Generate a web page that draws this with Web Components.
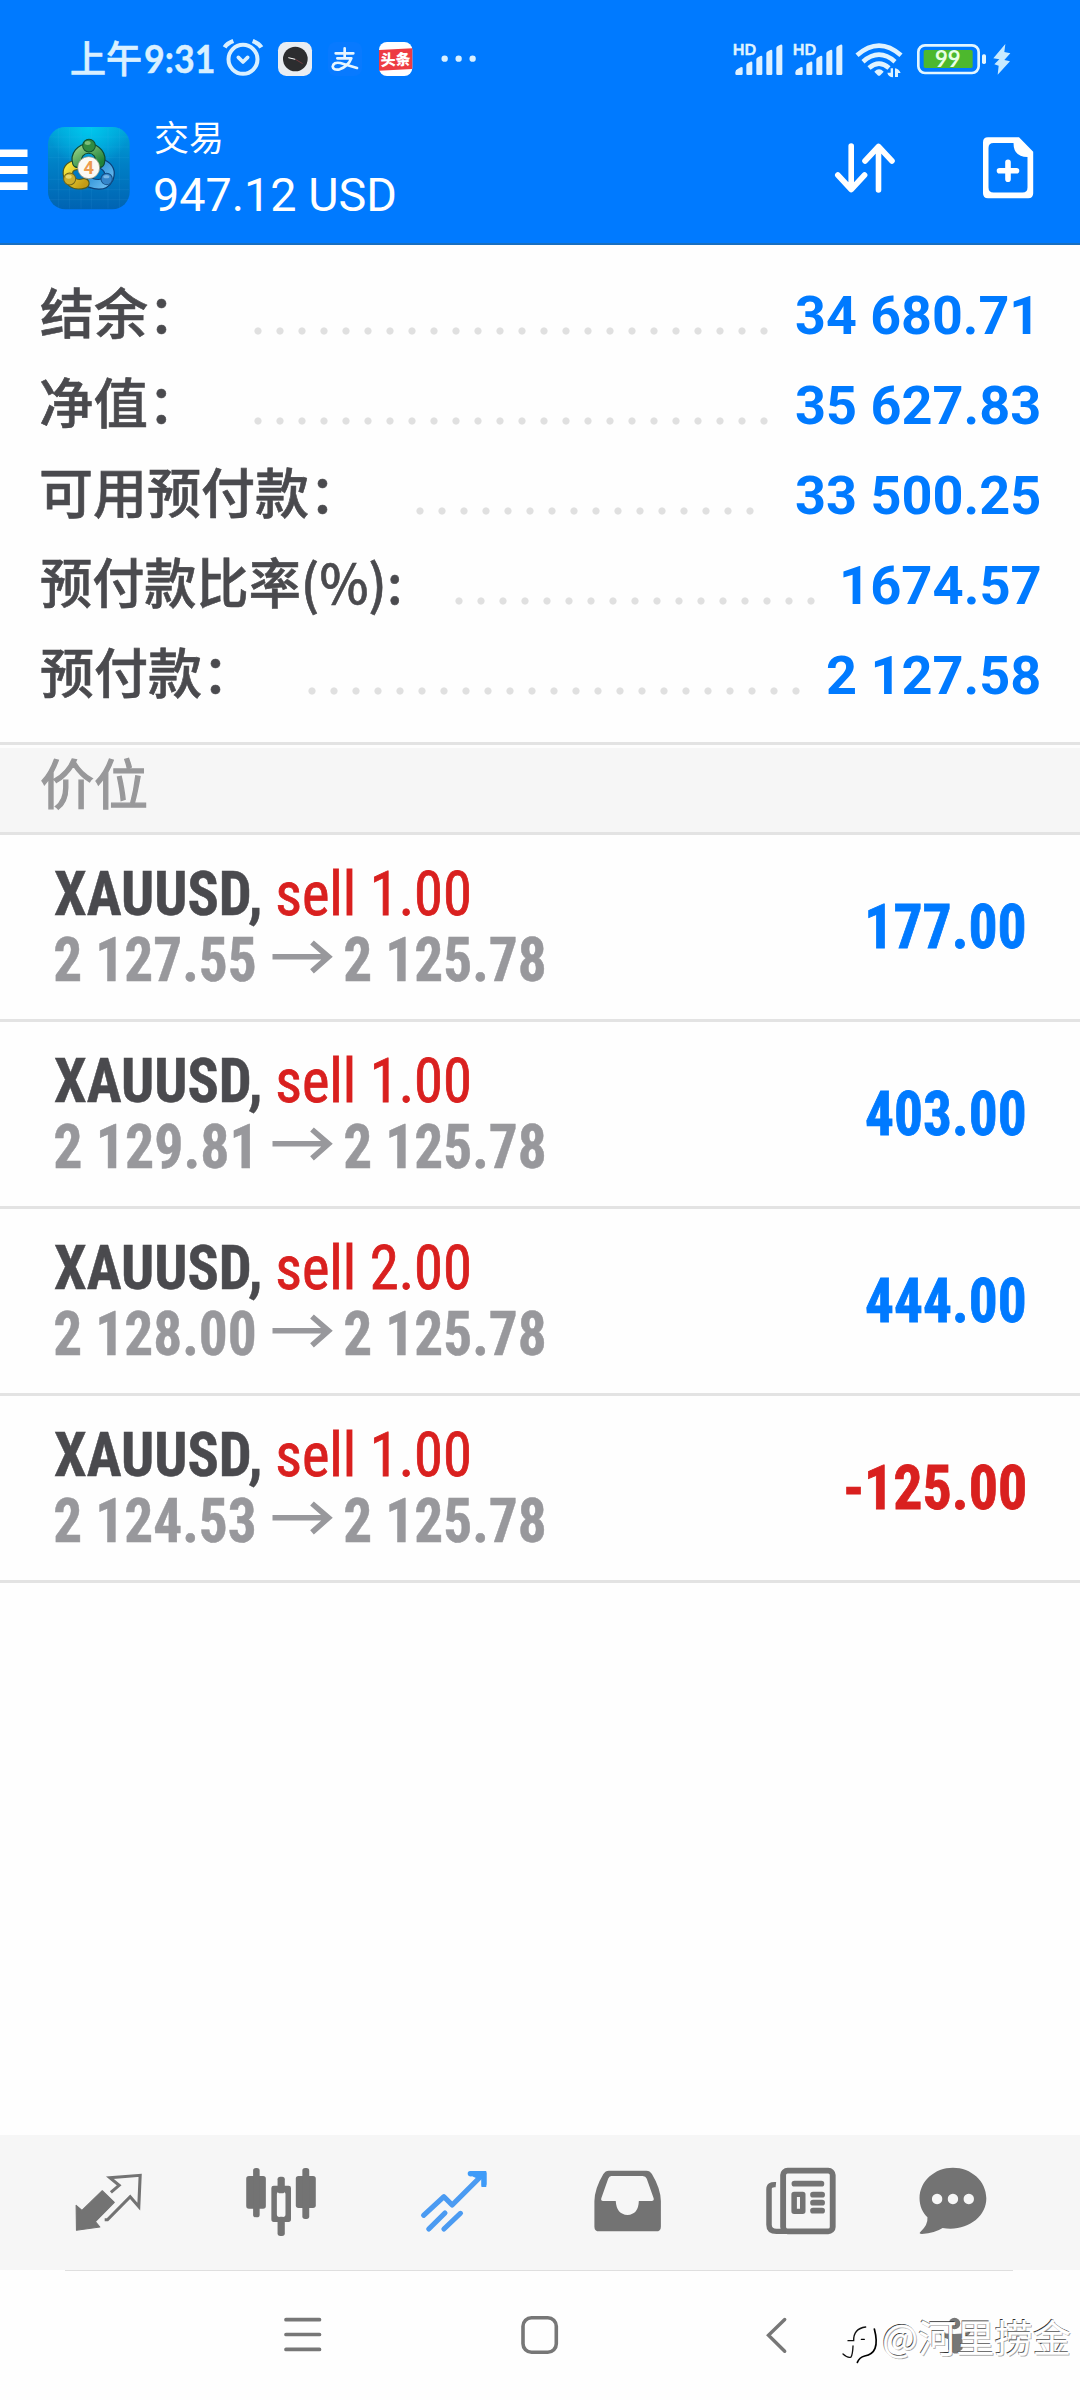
<!DOCTYPE html>
<html lang="zh-CN">
<head>
<meta charset="utf-8">
<title>交易</title>
<style>
html,body{margin:0;padding:0;background:#fefefe}
body{width:1080px;height:2400px;overflow:hidden;font-family:Roboto,"Noto Sans CJK SC",sans-serif}
</style>
</head>
<body>
<trade-app></trade-app>
<script>
const CJK = '"Noto Sans CJK SC",sans-serif';
const LATIN = 'Roboto,"Noto Sans CJK SC",sans-serif';
const COND = '"Roboto Condensed",Roboto,"Noto Sans CJK SC",sans-serif';
const FONTS = {cjk: CJK, latin: LATIN, cond: COND, round: 'Lato,sans-serif'};

/* Text whose ink spans exactly `w` pixels; the host's bottom edge is the baseline.
   `st` thickens the strokes by that many pixels. */
class FitText extends HTMLElement {
  connectedCallback() {
    const w = +this.getAttribute('w'), b = +this.getAttribute('b'), fs = +this.getAttribute('fs');
    const fw = this.getAttribute('fw') || 400, ff = FONTS[this.getAttribute('ff') || 'latin'];
    const c = document.createElement('canvas').getContext('2d');
    c.font = `${fw} ${fs}px ${ff}`;
    const m = c.measureText(this.textContent);
    const s = w / (m.actualBoundingBoxLeft + m.actualBoundingBoxRight);
    const lh = Math.round(fs);
    const base = lh / 2 + (m.fontBoundingBoxAscent - m.fontBoundingBoxDescent) / 2;
    this.attachShadow({mode: 'open'}).innerHTML = `<style>
      :host{display:block;flex:none;width:${w}px;height:${b}px}
      span{display:block;width:max-content;white-space:pre;font:${fw} ${fs}px/${lh}px ${ff};transform-origin:0 0;
      -webkit-text-stroke:${this.getAttribute('st') || 0}px currentColor;
      transform:translate(${m.actualBoundingBoxLeft * s}px,${b - base}px) scaleX(${s})}
      </style><span><slot></slot></span>`;
  }
}
customElements.define('fit-text', FitText);

const signal = x => `<text x="${x}" y="75" font-family="Lato" font-weight="700" font-size="47" textLength="70" lengthAdjust="spacingAndGlyphs" fill="#dff3ff" stroke="#dff3ff" stroke-width="1.5">HD</text>
  <path fill="#dff1ff" d="M${x+8} 135v-8q0-7 8-11l8-4q6-3 6 3v16q0 4-4 4h-14q-4 0-4-4zM${x+41} 131v-26q0-4 6-7l6-3q6-2 6 3v33q0 4-4 4h-10q-4 0-4-4zM${x+71} 131V88q0-4 6-7l6-3q6-2 6 3v50q0 4-4 4h-10q-4 0-4-4zM${x+101} 131V70q0-4 6-7l6-3q6-2 6 3v68q0 4-4 4h-10q-4 0-4-4zM${x+131} 131V54q0-4 6-7l6-3q6-2 6 3v84q0 4-4 4h-10q-4 0-4-4z"/>`;

const ICONS = {
  alarm: ['10 28 126 116', 42, 38.7, `<g fill="none" stroke="#d9f0ff" stroke-linecap="round" stroke-linejoin="round"><circle cx="70" cy="92" r="43.500" stroke-width="12"/><path stroke-width="11" d="M56 86l14 14 14-14"/><path stroke-width="13" stroke-linecap="butt" d="M15 56Q22 44 41 37M125 56Q118 44 99 37"/></g>`],
  clock: ['174 36 102 102', 34, 34, `<rect x="174" y="36" width="102" height="102" rx="25" fill="#e9edf2"/><circle cx="226" cy="87" r="37" fill="#2c2d2f"/><path d="M205 83l21 5" stroke="#fff" stroke-width="3"/><path d="M226 88l22 13" stroke="#914348" stroke-width="2"/>`],
  alipay: ['324 36 102 102', 34, 34, `<rect x="324" y="36" width="102" height="102" rx="24" fill="#087aff"/><g fill="none" stroke="#e7f6ff" stroke-width="8" stroke-linecap="round" stroke-linejoin="round"><path d="M347 70h53M374 55v28M352 85h42Q385 109 359 118Q339 121 338 110Q340 95 361 99L411 114"/></g>`],
  toutiao: ['476 36 100 102', 33.3, 34, `<rect x="476" y="36" width="100" height="102" rx="24" fill="#fff"/><path fill="#ed3b43" d="M476 60l100-5v62l-100 5z"/><text x="481" y="106" transform="rotate(-2 526 88)" font-family="Noto Sans CJK SC" font-weight="900" font-size="46" textLength="90" lengthAdjust="spacingAndGlyphs" fill="#fff">头条</text>`],
  more: ['664 76 106 22', 35.3, 7.3, `<g fill="#d9f0ff"><circle cx="675" cy="87" r="9.5"/><circle cx="717" cy="87" r="9.5"/><circle cx="759" cy="87" r="9.5"/></g>`],
  sig1: ['36 36 180 108', 60, 36, signal(38)],
  sig2: ['216 36 180 108', 60, 36, signal(218)],
  wifi: ['396 36 180 108', 60, 36, `<g fill="none" stroke="#dff3ff" stroke-width="14"><path d="M411 76Q477 18 543 76M429 95Q477 53 525 95M447 114Q477 88 507 114"/></g><path d="M463 125q14-14 28 0l-10 11q-4 3-8 0z" fill="#dff3ff"/><g fill="#dff3ff"><path d="M512 115h7v27q-14-1-17-14h10zM525 115q12 2 17 14h-8v12h-9z"/></g>`],
  battery: ['576 36 312 108', 104, 36, `<rect x="595" y="46" width="181" height="83" rx="20" fill="none" stroke="#e3f6ff" stroke-width="8"/><rect x="611" y="60" width="147" height="54" rx="5" fill="#4db82d"/><text x="645" y="112" font-family="Lato" font-weight="700" font-size="69" textLength="77" lengthAdjust="spacingAndGlyphs" fill="#e8ffe5">99</text><rect x="786" y="73" width="12" height="29" rx="5" fill="#e3f6ff"/><path d="M856 42l-36 43 18 3-15 15 13 4-3 27 37-40-17-4 18-20-18-4z" fill="#c8eaff"/>`],
  burger: ['0 146 28 48', 28, 48, `<path fill="#fff" d="M0 149.5h27.5v7.5H0zM0 166h27.5v8H0zM0 182.3h27.5v7.7H0z"/>`],
  mt4: ['23 290 245 247', 81.7, 82.3, `<defs><linearGradient id="b" x2="0" y2="1"><stop stop-color="#00a5d8"/><stop offset=".45" stop-color="#0080c6"/><stop offset="1" stop-color="#0063b2"/></linearGradient><radialGradient id="l" cx=".5" cy="0" r=".5"><stop stop-color="#00c8ee"/><stop offset="1" stop-color="#00c8ee" stop-opacity="0"/></radialGradient><linearGradient id="g" x2="1" y2="1"><stop stop-color="#8ccb80"/><stop offset="1" stop-color="#1f8239"/></linearGradient><linearGradient id="y" x2="1" y2="1"><stop stop-color="#f6e63e"/><stop offset="1" stop-color="#c49b16"/></linearGradient><linearGradient id="u" x2="1" y2="1"><stop stop-color="#1c86d0"/><stop offset="1" stop-color="#6bbcf0"/></linearGradient></defs>
   <rect x="23" y="290" width="245" height="247" rx="52" fill="url(#b)"/><rect x="23" y="290" width="245" height="247" rx="52" fill="url(#l)"/><path d="M54 292v243M88 292v243M122 292v243M153 292v243M203 292v243M237 292v243M25 320h241M25 350h241M25 382h241M25 447h241M25 478h241M25 508h241" stroke="#5cc9ff" stroke-opacity=".18" stroke-width="1.5"/>
   <g stroke-linecap="round" fill="none"><path d="M187 402Q214 416 205 443Q190 472 150 457" stroke="#0c4078" stroke-width="32"/><path d="M187 402Q214 416 205 443Q190 472 150 457" stroke="url(#u)" stroke-width="25"/>
   <path d="M108 404Q77 409 84 438Q96 470 132 459" stroke="#4f5a1d" stroke-width="32"/><path d="M108 404Q77 409 84 438Q96 470 132 459" stroke="url(#y)" stroke-width="25"/>
   <path d="M111 397A35 33 0 1 1 178 397" stroke="#0e4a33" stroke-width="32"/><path d="M111 397A35 33 0 1 1 178 397" stroke="url(#g)" stroke-width="25"/></g>
   <circle cx="146" cy="346" r="19" fill="#2f8b42" stroke="#12502c" stroke-width="3"/><ellipse cx="142" cy="338" rx="9" ry="6" fill="#9ed392" opacity=".7"/><circle cx="88" cy="446" r="18" fill="#cdaf2c" stroke="#6d641c" stroke-width="3"/><ellipse cx="85" cy="439" rx="9" ry="6" fill="#f5e887" opacity=".7"/><circle cx="199" cy="446" r="17" fill="#3586cb" stroke="#134e86" stroke-width="3"/><ellipse cx="198" cy="439" rx="9" ry="5" fill="#a5d5f6" opacity=".6"/><circle cx="145" cy="412" r="33" fill="#fbf9f4" stroke="#8e8b70" stroke-width="2"/><text x="145" y="432" text-anchor="middle" font-family="Roboto" font-weight="700" font-size="55" fill="#ed9b4e">4</text>`],
  sort: ['834 141 63 54', 63, 54, `<path fill="none" stroke="#fff" stroke-width="5.6" stroke-linecap="round" stroke-linejoin="round" d="M851.2 146v43.500M837.800 175l13.400 14.500 13.400-14.500M878.500 190v-43.500M865 161l13.500-14.500 13.500 14.500"/>`],
  add: ['982 136 52 64', 52, 64, `<path fill="#fff" fill-rule="evenodd" d="M988 137.300h31l14.200 14.500v41.500q0 5-5 5H988q-5 0-5-5v-51q0-5 5-5zM993.500 143q-5 0-5 5v39.500q0 5 5 5h29q5 0 5-5v-30.500q-14 0-14-14z"/><path d="M999.500 170.800h17M1008 162.300v17" stroke="#fff" stroke-width="5.600" stroke-linecap="round"/>`],
  arrow: ['272 940 60 34', 60, 34, `<path d="M272.500 956.800h56M312 942.500l16.500 14.300-16.500 14.500" fill="none" stroke="#98989c" stroke-width="5.600"/>`],
  quotes: ['0 45 522.7 405', 180, 135, `<path fill="#737373" stroke="#737373" stroke-width="3" stroke-linejoin="round" d="M221 256l17 15 59-59 35 35-55 58 13 16-68 10z"/><path fill="none" stroke="#737373" stroke-width="9" d="M322 217l24-21-27-23 88-7-4 94-25-30-66 69h-8"/>`],
  chart: ['522.7 45 522.7 405', 180, 135, `<g fill="#737373"><rect x="715" y="168" width="57" height="98" rx="8"/><rect x="735" y="144" width="19" height="148" rx="8"/><rect x="859" y="168" width="58" height="96" rx="8"/><rect x="878" y="144" width="20" height="153" rx="8"/><rect x="806" y="170" width="21" height="50" rx="8"/><rect x="806" y="290" width="21" height="58" rx="8"/><path fill-rule="evenodd" d="M795 197h43q7 0 7 7v94q0 8-7 8h-43q-7 0-7-8v-94q0-7 7-7zM811 215q-7 0-7 8v60q0 8 7 8h11q7 0 7-8v-60q0-8-7-8z"/></g>`],
  trade: ['1045.3 45 522.7 405', 180, 135, `<path fill="none" stroke="#4b9bf2" stroke-width="15" stroke-linecap="round" stroke-linejoin="round" d="M1230 286l59-56 24 25 91-94"/><path fill="none" stroke="#3e9bf8" stroke-width="14" d="M1365 160h40v41"/><path d="M1245 327l47-48M1289 327l48-47" stroke="#4b9bf2" stroke-width="15" stroke-linecap="round"/><path d="M1365 153h40q8 0 8 8v32q0 7-7 8-8 0-8-7v-18l-5 3-22-10q-12 2-13-8 0-8 7-8z" fill="#3e9bf8"/>`],
  history: ['0 45 522.7 405', 180, 135, `<path fill="#737373" fill-rule="evenodd" d="M200 152h109q10 0 16 10 25 43 26 81v77q0 14-14 14H172q-14 0-14-14v-77q1-38 26-81 6-10 16-10zM207 168q-6 0-9 8l-20 59q-2 8 5 8h37q2 40 34 42 32-2 33-42h37q8 0 6-8l-20-59q-3-8-12-8z"/>`],
  news: ['522.7 45 522.7 405', 180, 135, `<g fill="none" stroke="#737373"><path stroke-width="16" d="M685 194q-20-2-20 14v106q0 20 22 20h30"/><rect x="706" y="152" width="144" height="182" rx="13" stroke-width="17"/></g><g stroke="#737373" stroke-width="17" stroke-linecap="round"><path d="M739 191h78M793 224h26M793 248h26M793 272h26"/></g><path fill="#737373" fill-rule="evenodd" d="M738 215h25q8 0 8 8v51q0 8-8 8h-25q-8 0-8-8v-51q0-8 8-8zM746 231v35h9v-35z"/>`],
  chat: ['1045.3 45 522.7 405', 180, 135, `<path fill="#737373" fill-rule="evenodd" d="M1199 143c53 0 97 40 97 92 0 59-60 101-127 89q-22 15-60 18-11-1-4-7 22-20 20-43c-14-13-23-34-23-57 0-52 44-92 97-92zM1153 221a15 16 0 1 0 .1 0zM1199 221a15 16 0 1 0 .1 0zM1245 221a15 16 0 1 0 .1 0z"/>`],
  menu: ['284 2316 37.500 40', 37.5, 40, `<path d="M286 2320.700h33.500M286 2335.500h33.500M286 2350.400h33.500" stroke="#777" stroke-width="3.700" stroke-linecap="round"/>`],
  home: ['521 2315 38 40', 38, 40, `<rect x="523" y="2317.800" width="33.300" height="34.500" rx="8.500" fill="none" stroke="#777" stroke-width="3.600"/>`],
  back: ['765 2315 24 40', 24, 40, `<path d="M784.700 2319.500L768.500 2335.300l16.200 16" fill="none" stroke="#777" stroke-width="3.400" stroke-linecap="round"/>`],
  person: ['936 2315 36 40', 36, 40, `<circle cx="954.500" cy="2323.500" r="5.800" fill="#777"/><path fill="#777" d="M938 2331.500q16 5 33 0l-2 3q-4 3-6.500 4.500v10l-5.500 4.500h-3l-6-4v-10.500q-8-2-10-7.500z"/>`],
  mark: ['62 76 110 116', 36.7, 38.7, `<g fill="none" stroke-linecap="round"><path d="M68 163q14 13 24 9 5-8 6-33M83 123h17q-1-36 36-41" stroke="#111" stroke-width="4"/><path d="M162 88q10 38 2 58-7 18-31 23-16 4-22 19" stroke="#000" stroke-width="5"/><path d="M123 119h9" stroke="#000" stroke-width="4"/></g>`]
};
class UiIcon extends HTMLElement {
  connectedCallback() {
    const [vb, w, h, body] = ICONS[this.getAttribute('name')];
    this.attachShadow({mode: 'open'}).innerHTML = `<style>:host{display:block;flex:none;width:${w}px;height:${h}px}svg{display:block;overflow:visible}</style>
      <svg width="${w}" height="${h}" viewBox="${vb}" preserveAspectRatio="none">${body}</svg>`;
  }
}
customElements.define('ui-icon', UiIcon);

const define = (name, css, html) => customElements.define(name, class extends HTMLElement {
  connectedCallback() {
    if (this.shadowRoot) return;
    this.attachShadow({mode: 'open'}).innerHTML = `<style>${css}</style>${typeof html === 'function' ? html(this) : html}`;
  }
});

define('status-bar', `
  :host{display:flex;justify-content:space-between;height:110px;box-sizing:border-box;padding:40px 64px 0 71px;color:#d9f0ff}
  .l,.r{display:flex}.r{padding-top:2px}
  .l>*{margin-top:2px}`, `
  <div class="l"><fit-text w="70" b="31" fs="37" fw="500" ff="cjk" st=".7">上午</fit-text>
  <fit-text style="margin-left:3.500px" w="69" b="31" fs="39" fw="700" ff="round" st=".4">9:31</fit-text>
  <ui-icon name="alarm" style="margin:-2px 0 0 9px"></ui-icon>
  <ui-icon name="clock" style="margin-left:13.500px"></ui-icon><ui-icon name="alipay" style="margin-left:16px"></ui-icon>
  <ui-icon name="toutiao" style="margin-left:16.700px"></ui-icon><ui-icon name="more" style="margin:15.300px 0 0 29.300px"></ui-icon></div>
  <div class="r"><ui-icon name="sig1"></ui-icon><ui-icon name="sig2"></ui-icon><ui-icon name="wifi"></ui-icon><ui-icon name="battery"></ui-icon></div>`);

define('app-bar', `
  :host{display:flex;height:135px;box-sizing:border-box;border-bottom:2px solid #196fc0;color:#fff}
  .t{display:flex;flex-direction:column;margin-left:26px;padding-top:10px;gap:26px;flex:1}`, `
  <ui-icon name="burger" style="margin-top:36px"></ui-icon>
  <ui-icon name="mt4" style="margin:16.700px 0 0 19.700px"></ui-icon>
  <div class="t"><fit-text w="66" b="30.500" fs="35" ff="cjk">交易</fit-text><fit-text w="240" b="33.500" fs="47">947.12 USD</fit-text></div>
  <ui-icon name="sort" style="margin:31px 85px 0 0"></ui-icon><ui-icon name="add" style="margin:26px 46px 0 0"></ui-icon>`);

define('summary-row', `
  :host{display:flex;height:90px;box-sizing:border-box;padding:10px 41px 0 40.500px;color:#4a4a4e}
  .d{height:8px;margin-top:36.500px;background:radial-gradient(circle at 4px 4px,#e0e0e0 3.2px,transparent 4px) 0 0/22px 8px repeat-x}
  .v{margin-left:auto;color:#007aff}`, el => {
  const a = n => el.getAttribute(n);
  return `<fit-text w="${a('lw')}" b="44" fs="54" fw="500" ff="cjk" st=".6">${a('label')}</fit-text>
  <div class="d" style="margin-left:${a('dx') - 4 - 40.5 - a('lw')}px;width:${(a('n') - 1) * 22 + 8}px"></div>
  <fit-text class="v" style="margin-right:${a('mr') || 0}px" w="${a('vw')}" b="44.300" fs="54.500" fw="700">${a('value')}</fit-text>`;
});

define('section-head', `
  :host{display:block;height:93px;box-sizing:border-box;border:3px solid #e3e3e3;border-width:3px 0;background:linear-gradient(#fdfdfd 3px,#f6f6f6 3px);padding:14px 40.500px 0;color:#98989a}`,
  `<fit-text w="105" b="46.500" fs="54" fw="400" ff="cjk" st="1.300">价位</fit-text>`);

define('position-row', `
  :host{display:flex;height:187px;box-sizing:border-box;border-bottom:3px solid #e3e3e3;padding:36px 55.500px 0 55px}
  .i{display:flex;flex-direction:column;gap:20.500px}.a,.b{display:flex}
  .a{color:#4a4a4e}.s{margin-left:18.500px;color:#d9201f}.b{color:#98989c}
  ui-icon{margin-top:4.500px}
  .p{margin:32.700px 0 0 auto;color:#007aff}.p.neg{color:#d9201f}`, el => {
  const a = n => el.getAttribute(n), ow = +a('ow') || 199.5;
  return `<div class="i"><div class="a"><fit-text w="204.500" b="44" fs="62" fw="700" ff="cond" st=".5">XAUUSD,</fit-text><fit-text class="s" w="191.500" b="44" fs="62" fw="400" ff="cond" st=".8">sell ${a('lots')}</fit-text></div>
  <div class="b"><fit-text w="${ow}" b="45" fs="62" fw="700" ff="cond" st=".5">${a('open')}</fit-text><ui-icon name="arrow" style="margin-left:${217.2 - ow}px"></ui-icon><fit-text style="margin-left:13.300px" w="199.500" b="45" fs="62" fw="700" ff="cond" st=".5">2 125.78</fit-text></div></div>
  <fit-text class="p ${a('pl')[0] === '-' ? 'neg' : ''}" w="${a('pw')}" b="44.500" fs="62" fw="700" ff="cond" st=".8">${a('pl')}</fit-text>`;
});

define('tab-bar', `
  :host{display:flex;height:135px;background:#f6f6f6;margin-top:auto}`,
  ['quotes', 'chart', 'trade', 'history', 'news', 'chat'].map(n => `<ui-icon name="${n}"></ui-icon>`).join(''));

define('nav-bar', `
  :host{display:flex;position:relative;height:130px;box-sizing:border-box;padding:45px 0 0 284px;background:linear-gradient(90deg,transparent 65px,#dfdfdf 65px,#dfdfdf 1013px,transparent 1013px) 0 0/1080px 1px no-repeat #fefefe}
  .w{position:absolute;left:841px;top:54px;display:flex;color:#fff}
  .t{text-shadow:-.7px -.7px 0 #333,.9px .9px .5px rgba(0,0,0,.36)}`, `
  <ui-icon name="menu"></ui-icon><ui-icon name="home" style="margin-left:199.500px"></ui-icon><ui-icon name="back" style="margin-left:206px"></ui-icon><ui-icon name="person" style="margin-left:147px"></ui-icon>
  <div class="w"><ui-icon name="mark" style="margin-top:1px"></ui-icon><fit-text class="t" style="margin-left:6px" w="186.500" b="28.500" fs="37.500" ff="cjk" st=".3">@河里捞金</fit-text></div>`);

define('trade-app', `
  :host{display:flex;flex-direction:column;width:1080px;height:2400px;background:#fefefe}
  header{background:#007aff}.sum{height:497px;box-sizing:border-box;padding-top:35px}`, `
  <header><status-bar></status-bar><app-bar></app-bar></header>
  <div class="sum">
  <summary-row label="结余：" lw="126" dx="258.300" n="24" value="34 680.71" vw="235" mr="8.500"></summary-row>
  <summary-row label="净值：" lw="126" dx="258.300" n="24" value="35 627.83" vw="243"></summary-row>
  <summary-row label="可用预付款：" lw="287" dx="420" n="16" value="33 500.25" vw="243"></summary-row>
  <summary-row label="预付款比率(%):" lw="358.500" dx="459.300" n="17" value="1674.57" vw="196.500"></summary-row>
  <summary-row label="预付款：" lw="180" dx="312.300" n="23" value="2 127.58" vw="212"></summary-row></div>
  <section-head></section-head>
  <position-row lots="1.00" open="2 127.55" pl="177.00" pw="156.500"></position-row>
  <position-row lots="1.00" open="2 129.81" ow="195" pl="403.00" pw="158.500"></position-row>
  <position-row lots="2.00" open="2 128.00" pl="444.00" pw="158.500"></position-row>
  <position-row lots="1.00" open="2 124.53" pl="-125.00" pw="179"></position-row>
  <tab-bar></tab-bar><nav-bar></nav-bar>`);
</script>
</body>
</html>
